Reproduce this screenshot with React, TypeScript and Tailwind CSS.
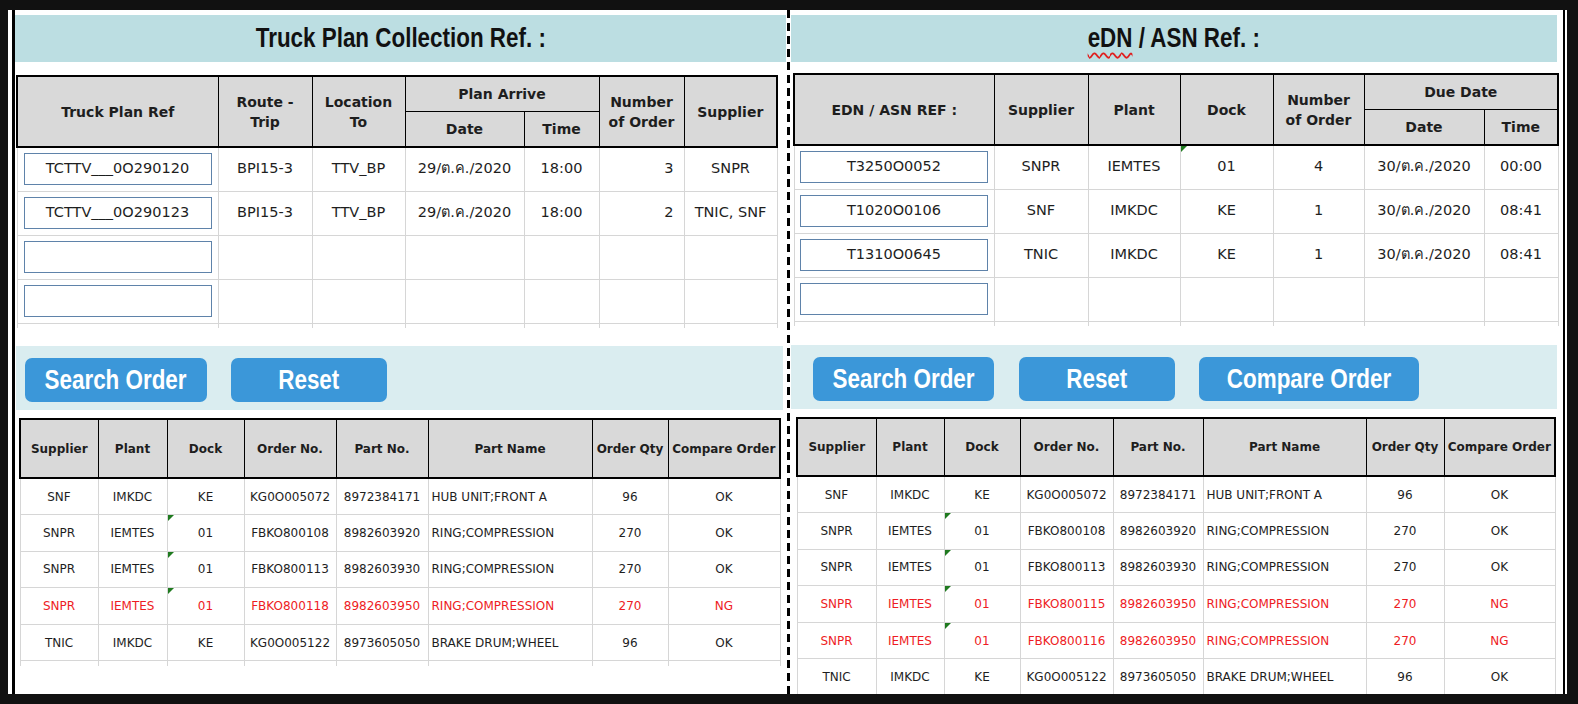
import React from 'react';

const cellText = "font-['DejaVu_Sans',sans-serif] text-[#1e1e1e]";
const narrow = "inline-block scale-x-[0.83] font-['Liberation_Sans',Arial,sans-serif] text-[27px] font-bold";

type OrderRow = {
  supplier: string;
  plant: string;
  dock: string;
  order: string;
  part: string;
  name: string;
  qty: string;
  result: string;
  ng?: boolean;
  flag?: boolean;
};

const leftOrders: OrderRow[] = [
  { supplier: 'SNF', plant: 'IMKDC', dock: 'KE', order: 'KG0O005072', part: '8972384171', name: 'HUB UNIT;FRONT A', qty: '96', result: 'OK' },
  { supplier: 'SNPR', plant: 'IEMTES', dock: '01', order: 'FBKO800108', part: '8982603920', name: 'RING;COMPRESSION', qty: '270', result: 'OK', flag: true },
  { supplier: 'SNPR', plant: 'IEMTES', dock: '01', order: 'FBKO800113', part: '8982603930', name: 'RING;COMPRESSION', qty: '270', result: 'OK', flag: true },
  { supplier: 'SNPR', plant: 'IEMTES', dock: '01', order: 'FBKO800118', part: '8982603950', name: 'RING;COMPRESSION', qty: '270', result: 'NG', ng: true, flag: true },
  { supplier: 'TNIC', plant: 'IMKDC', dock: 'KE', order: 'KG0O005122', part: '8973605050', name: 'BRAKE DRUM;WHEEL', qty: '96', result: 'OK' },
];

const rightOrders: OrderRow[] = [
  { supplier: 'SNF', plant: 'IMKDC', dock: 'KE', order: 'KG0O005072', part: '8972384171', name: 'HUB UNIT;FRONT A', qty: '96', result: 'OK' },
  { supplier: 'SNPR', plant: 'IEMTES', dock: '01', order: 'FBKO800108', part: '8982603920', name: 'RING;COMPRESSION', qty: '270', result: 'OK', flag: true },
  { supplier: 'SNPR', plant: 'IEMTES', dock: '01', order: 'FBKO800113', part: '8982603930', name: 'RING;COMPRESSION', qty: '270', result: 'OK', flag: true },
  { supplier: 'SNPR', plant: 'IEMTES', dock: '01', order: 'FBKO800115', part: '8982603950', name: 'RING;COMPRESSION', qty: '270', result: 'NG', ng: true, flag: true },
  { supplier: 'SNPR', plant: 'IEMTES', dock: '01', order: 'FBKO800116', part: '8982603950', name: 'RING;COMPRESSION', qty: '270', result: 'NG', ng: true, flag: true },
  { supplier: 'TNIC', plant: 'IMKDC', dock: 'KE', order: 'KG0O005122', part: '8973605050', name: 'BRAKE DRUM;WHEEL', qty: '96', result: 'OK' },
];

function Flag() {
  return <span className="absolute left-0 top-0 h-0 w-0 border-r-[6px] border-t-[6px] border-r-transparent border-t-[#1f7a1f]" />;
}

function Title({ children }: { children: React.ReactNode }) {
  return (
    <div className="flex h-[47px] items-center justify-center bg-[#bcdee2]">
      <span className={`${narrow} text-[#111]`}>{children}</span>
    </div>
  );
}

function Btn({ label, w }: { label: string; w: string }) {
  return (
    <div className={`${w} flex h-[44px] shrink-0 items-center justify-center rounded-[7px] bg-[#3b97d9]`}>
      <span className={`${narrow} text-white`}>{label}</span>
    </div>
  );
}

function InputBox({ value, w }: { value?: string; w: string }) {
  return (
    <div className={`${w} mx-auto flex h-[32px] items-center justify-center border border-[#5f83aa] bg-white text-[14.5px]`}>
      {value}
    </div>
  );
}

const th = 'border border-black bg-[#d9d9d9] font-bold leading-[20px]';
const td = 'border border-[#d6d6d6]';

function OrderTable({ rows, cols, width, headH }: { rows: OrderRow[]; cols: string[]; width: string; headH: string }) {
  const heads = ['Supplier', 'Plant', 'Dock', 'Order No.', 'Part No.', 'Part Name', 'Order Qty', 'Compare Order'];
  return (
    <table className={`${width} ${cellText} table-fixed border-collapse text-[12px]`}>
      <colgroup>
        {cols.map((c, i) => (
          <col key={i} className={c} />
        ))}
      </colgroup>
      <thead>
        <tr className={headH}>
          {heads.map((h, i) => (
            <th
              key={h}
              className={`${th} border-t-2 border-b-2 whitespace-nowrap text-[12px] ${i === 0 ? 'border-l-2' : ''} ${i === heads.length - 1 ? 'border-r-2' : ''}`}
            >
              {h}
            </th>
          ))}
        </tr>
      </thead>
      <tbody>
        {rows.map((r) => {
          const color = r.ng ? 'text-[#ee1c24]' : '';
          return (
            <tr key={r.order} className={`h-[36.6px] ${color}`}>
              <td className={`${td} text-center`}>{r.supplier}</td>
              <td className={`${td} text-center`}>{r.plant}</td>
              <td className={`${td} relative text-center`}>
                {r.flag && <Flag />}
                {r.dock}
              </td>
              <td className={`${td} text-center`}>{r.order}</td>
              <td className={`${td} whitespace-nowrap text-center`}>{r.part}</td>
              <td className={`${td} whitespace-nowrap pl-[3px] text-left`}>{r.name}</td>
              <td className={`${td} text-center`}>{r.qty}</td>
              <td className={`${td} text-center`}>{r.result}</td>
            </tr>
          );
        })}
        <tr className="h-[5px]">
          {cols.map((c, i) => (
            <td key={i} className="border-x border-t border-[#d6d6d6]" />
          ))}
        </tr>
      </tbody>
    </table>
  );
}

function LeftPanel() {
  const planRows = [
    { ref: 'TCTTV___0O290120', route: 'BPI15-3', loc: 'TTV_BP', date: '29/ต.ค./2020', time: '18:00', num: '3', sup: 'SNPR' },
    { ref: 'TCTTV___0O290123', route: 'BPI15-3', loc: 'TTV_BP', date: '29/ต.ค./2020', time: '18:00', num: '2', sup: 'TNIC, SNF' },
    { ref: '', route: '', loc: '', date: '', time: '', num: '', sup: '' },
    { ref: '', route: '', loc: '', date: '', time: '', num: '', sup: '' },
  ];
  const cols = ['w-[201px]', 'w-[94px]', 'w-[93px]', 'w-[119px]', 'w-[75px]', 'w-[85px]', 'w-[93px]'];
  return (
    <div className="h-full w-[771px] shrink-0 pt-[5px]">
      <Title>Truck Plan Collection Ref. :</Title>

      <table className={`${cellText} ml-[1px] mt-[13px] w-[760px] table-fixed border-collapse text-[14.5px]`}>
        <colgroup>
          {cols.map((c, i) => (
            <col key={i} className={c} />
          ))}
        </colgroup>
        <thead className="text-[14px]">
          <tr className="h-[35px]">
            <th rowSpan={2} className={`${th} border-l-2 border-t-2 border-b-2`}>Truck Plan Ref</th>
            <th rowSpan={2} className={`${th} border-t-2 border-b-2`}>Route -<br />Trip</th>
            <th rowSpan={2} className={`${th} border-t-2 border-b-2`}>Location<br />To</th>
            <th colSpan={2} className={`${th} border-t-2`}>Plan Arrive</th>
            <th rowSpan={2} className={`${th} border-t-2 border-b-2`}>Number<br />of Order</th>
            <th rowSpan={2} className={`${th} border-r-2 border-t-2 border-b-2`}>Supplier</th>
          </tr>
          <tr className="h-[36px]">
            <th className={`${th} border-b-2`}>Date</th>
            <th className={`${th} border-b-2`}>Time</th>
          </tr>
        </thead>
        <tbody>
          {planRows.map((r, i) => (
            <tr key={i} className="h-[44px]">
              <td className={td}>
                <InputBox value={r.ref} w="w-[188px]" />
              </td>
              <td className={`${td} text-center`}>{r.route}</td>
              <td className={`${td} text-center`}>{r.loc}</td>
              <td className={`${td} whitespace-nowrap text-center`}>{r.date}</td>
              <td className={`${td} text-center`}>{r.time}</td>
              <td className={`${td} pr-[10px] text-right`}>{r.num}</td>
              <td className={`${td} whitespace-nowrap text-center`}>{r.sup}</td>
            </tr>
          ))}
          <tr className="h-[5px]">
            {cols.map((c, i) => (
              <td key={i} className="border-x border-t border-[#d6d6d6]" />
            ))}
          </tr>
        </tbody>
      </table>

      <div className="ml-[1px] mt-[18px] flex h-[64px] w-[767px] items-start gap-[24px] bg-[#daedf0] pl-[9px] pt-[12px]">
        <Btn label="Search Order" w="w-[182px]" />
        <Btn label="Reset" w="w-[156px]" />
      </div>

      <div className="ml-[4px] mt-[8px]">
        <OrderTable
          rows={leftOrders}
          width="w-[760px]"
          headH="h-[59px]"
          cols={['w-[78px]', 'w-[69px]', 'w-[77px]', 'w-[92px]', 'w-[92px]', 'w-[164px]', 'w-[76px]', 'w-[112px]']}
        />
      </div>
    </div>
  );
}

function RightPanel() {
  const asnRows = [
    { ref: 'T3250O0052', sup: 'SNPR', plant: 'IEMTES', dock: '01', num: '4', date: '30/ต.ค./2020', time: '00:00', flag: true },
    { ref: 'T1020O0106', sup: 'SNF', plant: 'IMKDC', dock: 'KE', num: '1', date: '30/ต.ค./2020', time: '08:41' },
    { ref: 'T1310O0645', sup: 'TNIC', plant: 'IMKDC', dock: 'KE', num: '1', date: '30/ต.ค./2020', time: '08:41' },
    { ref: '', sup: '', plant: '', dock: '', num: '', date: '', time: '' },
  ];
  const cols = ['w-[200px]', 'w-[94px]', 'w-[92px]', 'w-[93px]', 'w-[91px]', 'w-[120px]', 'w-[74px]'];
  return (
    <div className="h-full w-[766px] shrink-0 pt-[5px]">
      <Title>
        <span className="underline decoration-[#e02020] decoration-wavy decoration-[1.5px] underline-offset-[5px]">eDN</span> / ASN Ref. :
      </Title>

      <table className={`${cellText} ml-[2px] mt-[11px] w-[764px] table-fixed border-collapse text-[14.5px]`}>
        <colgroup>
          {cols.map((c, i) => (
            <col key={i} className={c} />
          ))}
        </colgroup>
        <thead className="text-[14px]">
          <tr className="h-[35px]">
            <th rowSpan={2} className={`${th} border-l-2 border-t-2 border-b-2`}>EDN / ASN REF :</th>
            <th rowSpan={2} className={`${th} border-t-2 border-b-2`}>Supplier</th>
            <th rowSpan={2} className={`${th} border-t-2 border-b-2`}>Plant</th>
            <th rowSpan={2} className={`${th} border-t-2 border-b-2`}>Dock</th>
            <th rowSpan={2} className={`${th} border-t-2 border-b-2`}>Number<br />of Order</th>
            <th colSpan={2} className={`${th} border-r-2 border-t-2`}>Due Date</th>
          </tr>
          <tr className="h-[36px]">
            <th className={`${th} border-b-2`}>Date</th>
            <th className={`${th} border-r-2 border-b-2`}>Time</th>
          </tr>
        </thead>
        <tbody>
          {asnRows.map((r, i) => (
            <tr key={i} className="h-[44px]">
              <td className={td}>
                <InputBox value={r.ref} w="w-[188px]" />
              </td>
              <td className={`${td} text-center`}>{r.sup}</td>
              <td className={`${td} text-center`}>{r.plant}</td>
              <td className={`${td} relative text-center`}>
                {r.flag && <Flag />}
                {r.dock}
              </td>
              <td className={`${td} text-center`}>{r.num}</td>
              <td className={`${td} whitespace-nowrap text-center`}>{r.date}</td>
              <td className={`${td} text-center`}>{r.time}</td>
            </tr>
          ))}
          <tr className="h-[5px]">
            {cols.map((c, i) => (
              <td key={i} className="border-x border-t border-[#d6d6d6]" />
            ))}
          </tr>
        </tbody>
      </table>

      <div className="mt-[19px] flex h-[64px] w-[766px] items-start bg-[#daedf0] pl-[22px] pt-[12px]">
        <Btn label="Search Order" w="w-[181px]" />
        <div className="ml-[25px]">
          <Btn label="Reset" w="w-[156px]" />
        </div>
        <div className="ml-[24px]">
          <Btn label="Compare Order" w="w-[220px]" />
        </div>
      </div>

      <div className="ml-[5px] mt-[8px]">
        <OrderTable
          rows={rightOrders}
          width="w-[758px]"
          headH="h-[58px]"
          cols={['w-[79px]', 'w-[68px]', 'w-[76px]', 'w-[93px]', 'w-[90px]', 'w-[163px]', 'w-[78px]', 'w-[111px]']}
        />
      </div>
    </div>
  );
}

export default function App() {
  return (
    <div className="h-[704px] w-[1578px] overflow-hidden bg-[#111] pl-[8px] pt-[10px]">
      <div className="h-[684px] w-[1559px] overflow-hidden bg-white pl-[4px]">
        <div className="flex h-full w-[1553px] overflow-hidden border-l-[3px] border-r-2 border-black">
          <LeftPanel />
          <div className="flex w-[5px] shrink-0 justify-center">
            <div className="h-full w-[3px] bg-[repeating-linear-gradient(to_bottom,#000_0px,#000_8px,transparent_8px,transparent_13px)]" />
          </div>
          <RightPanel />
        </div>
      </div>
    </div>
  );
}
